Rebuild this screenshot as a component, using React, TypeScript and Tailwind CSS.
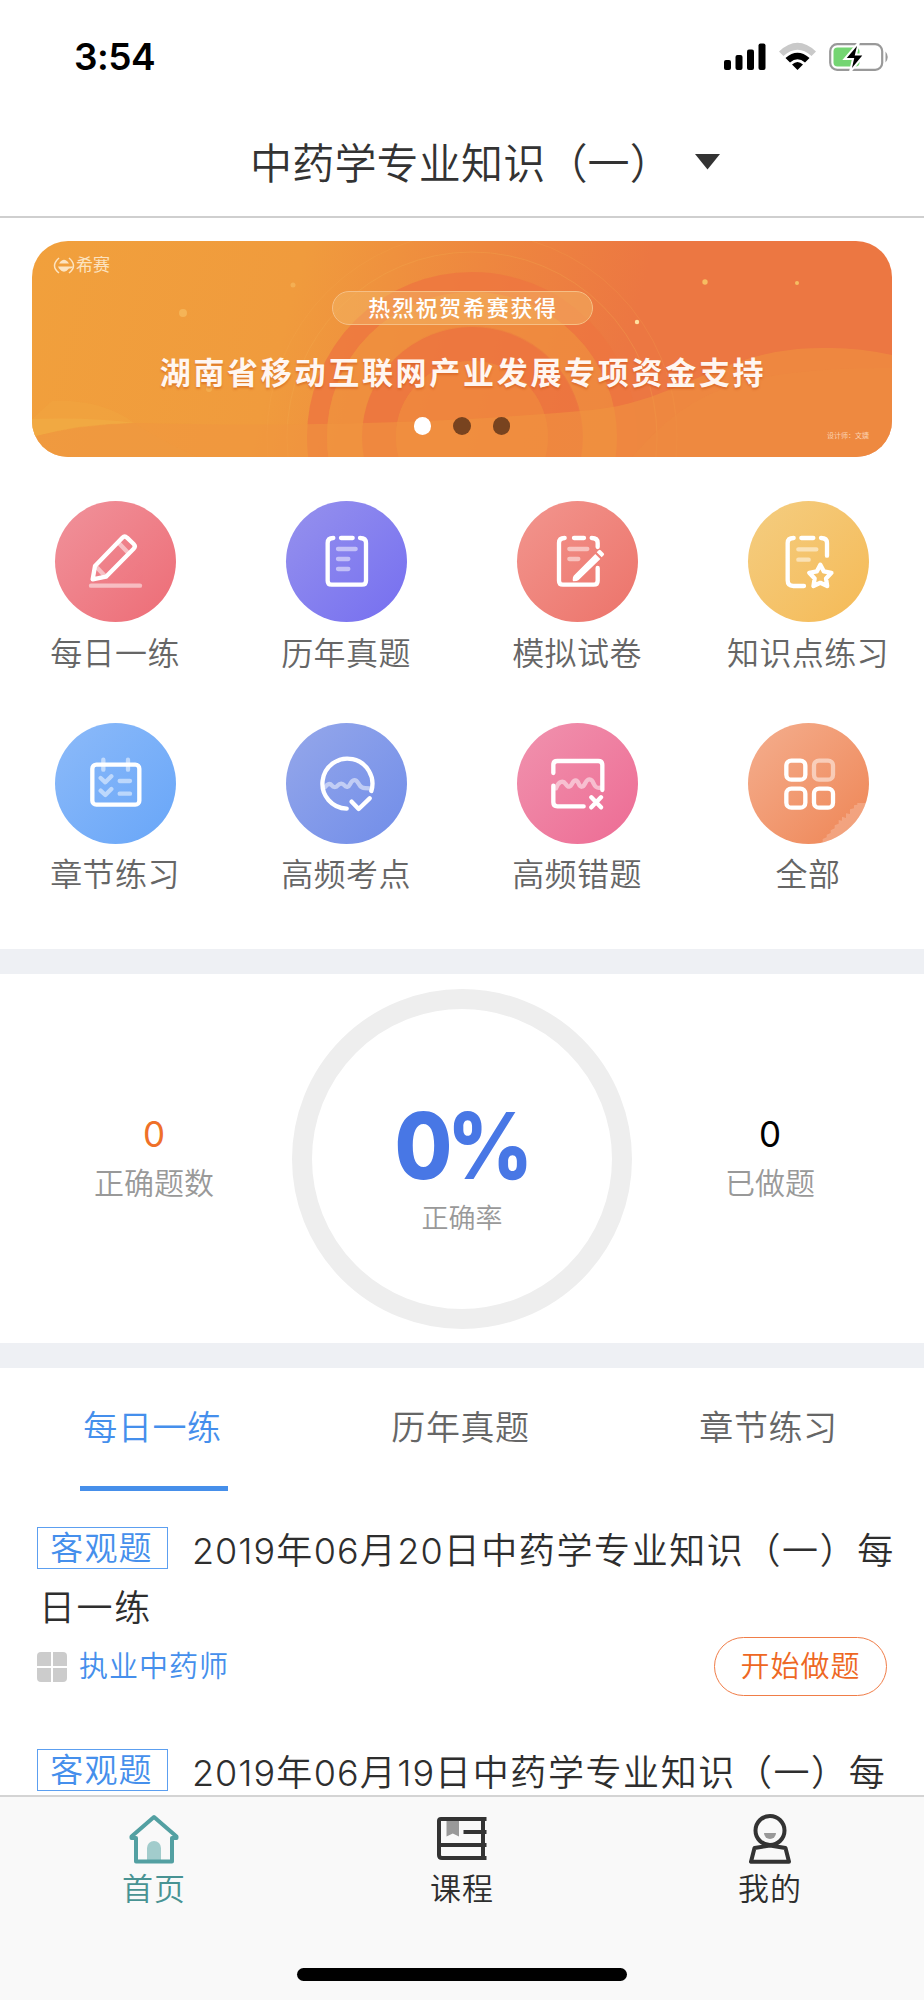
import type { ReactNode } from "react";

interface Entry {
    label: string;
    gradient: string;
    icon: ReactNode;
}

interface QuestionItem {
    day: string;
    rest?: string;
    exam?: string;
}

// Icons share a 363 unit canvas, white strokes by default
const ENTRIES: Entry[] = [
    {
        label: "每日一练",
        gradient: "from-[#f0929b] to-[#ed6c76]",
        icon: (
            <>
                <g opacity="0.5">
                    <path d="M192 127l25 26M127 201l20 21" />
                    <path d="M108 254h147" />
                </g>
                <path d="M113 235l7-40 82-85q7-7 14 0l20 19q7 7 0 14l-83 84z" />
            </>
        ),
    },
    {
        label: "历年真题",
        gradient: "from-[#9691ed] to-[#766ef0]",
        icon: (
            <>
                <path d="M142 111q-17 0-17 15v113q0 12 12 12h91q12 0 12-12V126q0-15-18-15M165 111h35" />
                <path opacity="0.5" d="M156 144h53M156 174h31M156 204h31" />
            </>
        ),
    },
    {
        label: "模拟试卷",
        gradient: "from-[#f2958e] to-[#ec736a]",
        icon: (
            <>
                <path d="M143 111q-17 0-17 15v113q0 12 12 12h92q12 0 12-12v-38M171 111h30M224 111q18 0 18 15v12" />
                <path opacity="0.5" d="M157 144h54M157 174h27" />
                <path stroke="none" fill="#fff" d="M167 237q0-9 3-13l65-65 15 15-66 64q-4 3-15 3q-2-1-2-4zM239 154l6-6q3-3 6 0l9 9q3 3 0 6l-6 6z" />
            </>
        ),
    },
    {
        label: "知识点练习",
        gradient: "from-[#f4cd80] to-[#f5ba55]",
        icon: (
            <>
                <path d="M137 111q-18 0-18 15v112q0 17 17 17h32M160 111h36M219 111q18 0 18 15v38" />
                <path opacity="0.5" d="M151 145h54M151 176h31" />
                <path d="M217 191l10.6 20.4 22.7 4-16.2 17 3.5 22.6-20.6-9.5-20.6 9.5 3.5-22.6-16.2-17 22.7-4z" />
            </>
        ),
    },
    {
        label: "章节练习",
        gradient: "from-[#8cbaf9] to-[#68a6f8]",
        icon: (
            <>
                <rect x="112" y="125" width="141" height="120" rx="12" />
                <path opacity="0.5" d="M145 110v30M219 110v30M137 165l14 13 18-18M137 203l14 13 18-18M194 174h31M194 212h31" />
            </>
        ),
    },
    {
        label: "高频考点",
        gradient: "from-[#95a7ea] to-[#718de9]",
        icon: (
            <>
                <path opacity="0.5" d="M118 192C124 182 132 180 137 187S151 194 156 187S170 180 175 187S188 193 192 184C200 167 210 168 217 181C224 195 230 196 251 196" />
                <path d="M256 204A75 75 0 1 0 182 257M197 236l21 22 33-32" />
            </>
        ),
    },
    {
        label: "高频错题",
        gradient: "from-[#f092ae] to-[#ed6b94]",
        icon: (
            <>
                <path opacity="0.5" d="M117 196C124 175 138 171 146 183S160 193 166 181S180 170 185 182S198 195 205 180C212 166 224 165 230 182C235 193 240 196 250 194" />
                <path d="M109 150v-25q0-11 12-11h123q12 0 12 12v75M109 188v50q0 12 12 12h79M223 223l29 30M252 223l-29 30" />
            </>
        ),
    },
    {
        label: "全部",
        gradient: "from-[#f4ae8e] to-[#ee8554]",
        icon: (
            <>
                <path stroke="none" fill="#fff" opacity="0.2" d="M224 363v-15l12-5v-8l12-5v-8l12-6v-9l12-5v-11l10 2v-12l12 4v-14l12 2v-14l12-3v-9l10-2v-5h40v124z" />
                <rect x="115" y="113" width="57" height="57" rx="15" />
                <rect opacity="0.5" x="198" y="113" width="57" height="57" rx="15" />
                <rect x="115" y="197" width="57" height="57" rx="15" />
                <rect x="198" y="197" width="57" height="57" rx="15" />
            </>
        ),
    },
];

const QUESTIONS: QuestionItem[] = [
    { day: "20", rest: "日一练", exam: "执业中药师" },
    { day: "19" },
];

function StatusBar() {
    return (
        <div className="flex h-[113px] items-start justify-between pl-[74px] pr-[35px] pt-[37px]">
            <span className="text-[37px] font-semibold leading-[40px] tracking-[-0.500px] text-black">3:54</span>
            <svg className="mt-[5px]" width="166" height="30" viewBox="0 0 166 30">
                <rect x="1" y="18" width="7" height="10" rx="2" />
                <rect x="12.5" y="13" width="7" height="15" rx="2" />
                <rect x="24" y="7.500" width="7" height="20.500" rx="2" />
                <rect x="35.500" y="1.500" width="7" height="26.500" rx="2" />
                <path d="M56 9.500Q74.500 -8 93 9.500L88.500 14Q74.500 1.500 60.500 14z" fill="#c9c9c9" />
                <path d="M62.500 16Q74.500 5.500 86.500 16L82 20.500Q74.500 14 67 20.500z" />
                <path d="M69 22.500Q74.500 17.500 80 22.500L74.500 28z" />
                <rect x="107.200" y="2.200" width="52" height="25.600" rx="7" fill="none" stroke="#999" strokeWidth="2.200" />
                <rect x="110.500" y="5.500" width="26" height="19" rx="4" fill="#74d572" />
                <path d="M162.500 9.500q4.500 5.500 0 11z" fill="#999" />
                <path d="M136 0L121.500 17h8.500l-3 13L141.500 12.500h-8.500z" stroke="#fff" strokeWidth="2" />
            </svg>
        </div>
    );
}

function Banner() {
    return (
        <div className="relative mx-8 mt-[23px] h-[216px] overflow-hidden rounded-[36px] bg-linear-[105deg,#f1a03c_0%,#f09b3d_30%,#ee873f_50%,#ec7742_68%,#ec7742_100%]">
            <svg className="absolute inset-0" width="860" height="216" viewBox="0 0 860 216" fill="none">
                <circle cx="440" cy="196" r="155" stroke="#ed7540" strokeWidth="20" opacity="0.8" />
                <circle cx="440" cy="196" r="128" stroke="#ef8f3e" strokeWidth="34" opacity="0.7" />
                <circle cx="440" cy="196" r="93" stroke="#ec743f" strokeWidth="34" opacity="0.85" />
                <circle cx="440" cy="196" r="76" fill="#ee853e" opacity="0.85" />
                <circle cx="440" cy="196" r="185" stroke="#f3ac50" opacity="0.3" />
                <circle cx="440" cy="196" r="205" stroke="#f3ac50" opacity="0.2" />
                <path d="M0 178Q60 176 102 182Q50 184 0 196z" fill="#f2aa43" />
                <path d="M20 160Q70 158 102 182Q50 183 0 196V178z" fill="#f2aa43" opacity="0.35" />
                <path d="M0 196Q55 181 110 182C250 186 420 182 560 169C650 160 690 107 790 107Q825 106 860 114V216H0z" fill="#f0953f" opacity="0.55" />
                <path d="M102 182Q130 200 165 216H0V196Q50 184 102 182z" fill="#f09a42" opacity="0.3" />
                <path d="M600 216C650 160 690 126 860 127V216z" fill="#ee8c40" opacity="0.4" />
                <g fill="#f6bd62">
                    <circle cx="151" cy="72" r="4" opacity="0.7" />
                    <circle cx="261" cy="44" r="2.500" opacity="0.6" />
                    <circle cx="177" cy="148" r="3" opacity="0.5" />
                    <circle cx="673" cy="41" r="2.700" />
                    <circle cx="765" cy="42" r="2" />
                    <circle cx="605" cy="81" r="2.200" fill="#ffe0a0" />
                </g>
                <g stroke="#fce3c0" strokeWidth="1.500">
                    <path d="M27 17Q18 25 27 32M37 17Q46 25 37 32" />
                    <path fill="#fce3c0" stroke="none" d="M27 22.500Q32 15 37 22.500zM26 25.500H41Q41 27.500 37 27.500Q32 34 27 27.500z" />
                </g>
            </svg>
            <div className="relative flex h-full flex-col items-center">
                <div className="flex h-[50px] w-full items-start pl-[44px] pt-[15px] text-[17px] leading-[19px] text-[#fce3c0]">希赛</div>
                <div className="flex h-[34px] w-[261px] items-center justify-center rounded-full border border-[#f6bf85] bg-[#f3b565]/50 pl-[2px] text-[22px] font-[450] tracking-[1.700px] text-white">
                    热烈祝贺希赛获得
                </div>
                <div className="mt-[28px] whitespace-nowrap pl-[2px] text-[31px] font-bold leading-[40px] tracking-[2.700px] text-[#fff6f1] [text-shadow:0_2px_2px_rgba(200,80,20,0.45)]">
                    湖南省移动互联网产业发展专项资金支持
                </div>
                <div className="mt-[24px] flex gap-[22px]">
                    <span className="size-[17.500px] rounded-full bg-white" />
                    <span className="size-[17.500px] rounded-full bg-[#78431f]" />
                    <span className="size-[17.500px] rounded-full bg-[#78431f]" />
                </div>
            </div>
            <span className="absolute bottom-[15px] right-[23px] text-[7px] leading-[12px] text-[#fbd2b0]">设计师：文婕</span>
        </div>
    );
}

function EntryGrid() {
    return (
        <div className="grid grid-cols-4 pt-[44px]">
            {ENTRIES.map((entry) => (
                <div key={entry.label} className="flex h-[221.500px] flex-col items-center">
                    <div className={`size-[121px] shrink-0 overflow-hidden rounded-full bg-linear-to-br ${entry.gradient}`}>
                        <svg viewBox="0 0 363 363" fill="none" stroke="#fff" strokeWidth="13" strokeLinecap="round" strokeLinejoin="round">
                            {entry.icon}
                        </svg>
                    </div>
                    <span className="mt-[9.500px] whitespace-nowrap pr-[1px] text-[32px] font-[350] leading-[44px] tracking-[0.400px] text-[#666]">{entry.label}</span>
                </div>
            ))}
        </div>
    );
}

function Stat({ value, label, color }: { value: string; label: string; color: string }) {
    return (
        <div className="flex flex-col items-center pb-[1px] font-[350]">
            <span className={`text-[35px] font-normal leading-[44px] ${color}`}>{value}</span>
            <span className="mt-[5px] text-[30px] leading-[44px] text-[#999]">{label}</span>
        </div>
    );
}

function Num({ children }: { children: ReactNode }) {
    return <span className="font-[350] tracking-[1px]">{children}</span>;
}

function Question({ day, rest, exam }: QuestionItem) {
    return (
        <div className="h-[222px] pl-[37px] pr-[20px]">
            <div className="text-[36px] font-[350] leading-[57px] tracking-[1.600px] text-[#2e2e2e]">
                <span className="mr-[24px] inline-flex h-[42px] w-[131px] items-center justify-center border-[1.500px] border-[#5c9ff0] pr-[2px] pt-[2px] align-[4px] text-[33px] leading-none tracking-[1.200px] text-[#458fec]">
                    客观题
                </span>
                <Num>2019</Num>年<Num>06</Num>月<Num>{day}</Num>日中药学专业知识（一）每
                {rest && (
                    <>
                        <br />
                        <span className="ml-[2px]">{rest}</span>
                    </>
                )}
            </div>
            {exam && (
                <div className="flex items-center justify-between pr-[17px]">
                    <div className="flex items-center gap-[12px]">
                        <div className="grid grid-cols-2 gap-[2px]">
                            <span className="size-[14px] rounded-tl-[4px] bg-[#ccc]" />
                            <span className="size-[14px] rounded-tr-[4px] bg-[#ccc]" />
                            <span className="size-[14px] rounded-bl-[4px] bg-[#ccc]" />
                            <span className="size-[14px] rounded-br-[4px] bg-[#ccc]" />
                        </div>
                        <span className="text-[29px] font-[350] tracking-[1px] text-[#458fec]">{exam}</span>
                    </div>
                    <button className="h-[59px] w-[173px] rounded-full border-[1.500px] border-[#f07d48] text-[29px] font-[350] tracking-[1px] text-[#ee6723]">
                        开始做题
                    </button>
                </div>
            )}
        </div>
    );
}

function TabBar() {
    return (
        <div className="flex h-[205px] flex-col items-center border-t-2 border-[#d4d4d4] bg-[#f9f9f9]">
            <div className="grid w-full grid-cols-3 text-[31px] font-[350] leading-[40px] tracking-[1px] text-[#2e2e2e]">
                <div className="flex flex-col items-center pt-[16px] text-[#489393]">
                    <svg width="52" height="52" viewBox="0 0 52 52" fill="none" stroke="#53a0a2" strokeWidth="4" strokeLinejoin="round">
                        <path d="M19 48V35a7 7 0 0 1 14 0v13z" fill="#a2cccc" stroke="none" />
                        <path d="M26 4L3.500 23.500V25H8v23.500h36V25h4.500v-1.500z" />
                    </svg>
                    <span className="mt-[4px]">首页</span>
                </div>
                <div className="flex flex-col items-center pt-[16px]">
                    <svg width="52" height="52" viewBox="0 0 52 52" fill="none" stroke="#333" strokeWidth="4">
                        <path d="M50.500 6H5q-2 0-2 2v34q0 3 3 3h44.500M47 6v39M3 32h47.500M27.500 19h23" />
                        <path d="M10.500 8H23v15.500l-6.200-3-6.300 3z" fill="#999" stroke="none" />
                    </svg>
                    <span className="mt-[4px]">课程</span>
                </div>
                <div className="flex flex-col items-center pt-[16px]">
                    <svg width="52" height="52" viewBox="0 0 52 52" fill="none" stroke="#333" strokeWidth="4" strokeLinejoin="round">
                        <circle cx="26" cy="17.500" r="14.500" />
                        <path d="M26 32.500L10.500 35 7 48.800h38L41.500 35z" />
                        <path d="M20 20h12a6 6 0 0 1-12 0z" fill="#999" stroke="none" />
                    </svg>
                    <span className="mt-[4px]">我的</span>
                </div>
            </div>
            <div className="mt-[58.500px] h-[13px] w-[330px] shrink-0 rounded-full bg-black" />
        </div>
    );
}

export default function App() {
    return (
        <div className="flex h-[2000px] w-[924px] flex-col overflow-hidden bg-white font-['Inter','Noto_Sans_CJK_SC',sans-serif]" lang="zh-CN">
            <StatusBar />
            <header className="flex h-[105px] shrink-0 items-start justify-center border-b-2 border-[#cfcfcf] pl-[46px] pt-[23px]">
                <h1 className="whitespace-nowrap text-[42px] font-[350] leading-[56px] tracking-[0.200px] text-[#333]">中药学专业知识（一）</h1>
                <svg className="ml-[23px] mt-[18px]" width="25" height="16" viewBox="0 0 25 16" fill="#333">
                    <path d="M0 0h25L12.500 15.500z" />
                </svg>
            </header>

            <Banner />
            <EntryGrid />

            {/* Accuracy summary */}
            <section className="mt-[5px] grid h-[419px] shrink-0 grid-cols-3 items-center border-y-[25px] border-[#eef0f4]">
                <Stat value="0" label="正确题数" color="text-[#ef7028]" />
                <div className="flex size-[340px] flex-col items-center justify-self-center rounded-full border-[20px] border-[#eee] pt-[87px]">
                    <span className="ml-[-2px] scale-x-[0.91] text-[92px] font-extrabold leading-[100px] tracking-[-6px] text-[#4877e5]">0%</span>
                    <span className="mt-[3px] text-[27px] font-[350] leading-[40px] text-[#999]">正确率</span>
                </div>
                <Stat value="0" label="已做题" color="text-black" />
            </section>

            <nav className="grid h-[123px] shrink-0 grid-cols-3 text-[34px] font-[350] tracking-[0.600px] text-[#666]">
                <div className="flex justify-center">
                    <span className="w-[148px] border-b-[5px] border-[#468fea] pr-[3px] pt-[34px] text-center text-[#458fec]">每日一练</span>
                </div>
                <span className="pr-[3px] pt-[34px] text-center">历年真题</span>
                <span className="pr-[3px] pt-[34px] text-center">章节练习</span>
            </nav>

            <main className="min-h-0 flex-1 overflow-hidden pt-[32px]">
                {QUESTIONS.map((q) => (
                    <Question key={q.day} {...q} />
                ))}
            </main>
            <TabBar />
        </div>
    );
}
